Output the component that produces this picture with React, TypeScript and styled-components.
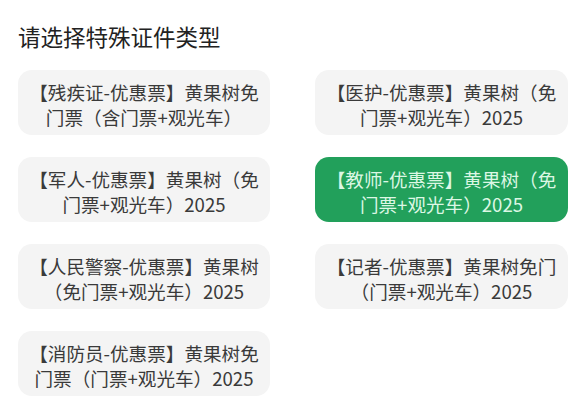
import React, { useState } from "react";
import styled, { createGlobalStyle } from "styled-components";

const Global = createGlobalStyle`
  html, body { margin: 0; padding: 0; background: #ffffff; }
  body { font-family: "Noto Sans CJK SC", "Noto Sans", sans-serif; }
`;

const Page = styled.div`
  width: 586px;
  height: 399px;
  overflow: hidden;
  box-sizing: border-box;
  padding: 21px 0 0 18px;
  background: #ffffff;
`;

const Title = styled.h2`
  margin: 0 0 19px 0;
  font-size: 22.5px;
  line-height: 30px;
  font-weight: 400;
  color: #222222;
`;

const Grid = styled.div`
  display: grid;
  grid-template-columns: 252px 253px;
  column-gap: 45px;
  row-gap: 22px;
`;

const Card = styled.button<{ $active: boolean }>`
  height: 65px;
  box-sizing: border-box;
  padding: 2px 4px 0;
  border: none;
  border-radius: 14px;
  background: ${(p) => (p.$active ? "#22a05b" : "#f4f4f4")};
  color: ${(p) => (p.$active ? "#dcf7e4" : "#3a3a3a")};
  font-family: inherit;
  font-size: 18.6px;
  line-height: 25px;
  text-align: center;
  display: flex;
  flex-direction: column;
  align-items: center;
  justify-content: center;
  cursor: pointer;
`;

const Line = styled.span`
  display: block;
  white-space: nowrap;
`;

const items: string[][] = [
  ["【残疾证-优惠票】黄果树免", "门票（含门票+观光车）"],
  ["【医护-优惠票】黄果树（免", "门票+观光车）2025"],
  ["【军人-优惠票】黄果树（免", "门票+观光车）2025"],
  ["【教师-优惠票】黄果树（免", "门票+观光车）2025"],
  ["【人民警察-优惠票】黄果树", "（免门票+观光车）2025"],
  ["【记者-优惠票】黄果树免门", "（门票+观光车）2025"],
  ["【消防员-优惠票】黄果树免", "门票（门票+观光车）2025"],
];

export default function App() {
  const [active, setActive] = useState(3);
  return (
    <Page>
      <Global />
      <Title>请选择特殊证件类型</Title>
      <Grid>
        {items.map((lines, i) => (
          <Card key={i} $active={i === active} onClick={() => setActive(i)}>
            {lines.map((l, j) => (
              <Line key={j}>{l}</Line>
            ))}
          </Card>
        ))}
      </Grid>
    </Page>
  );
}
